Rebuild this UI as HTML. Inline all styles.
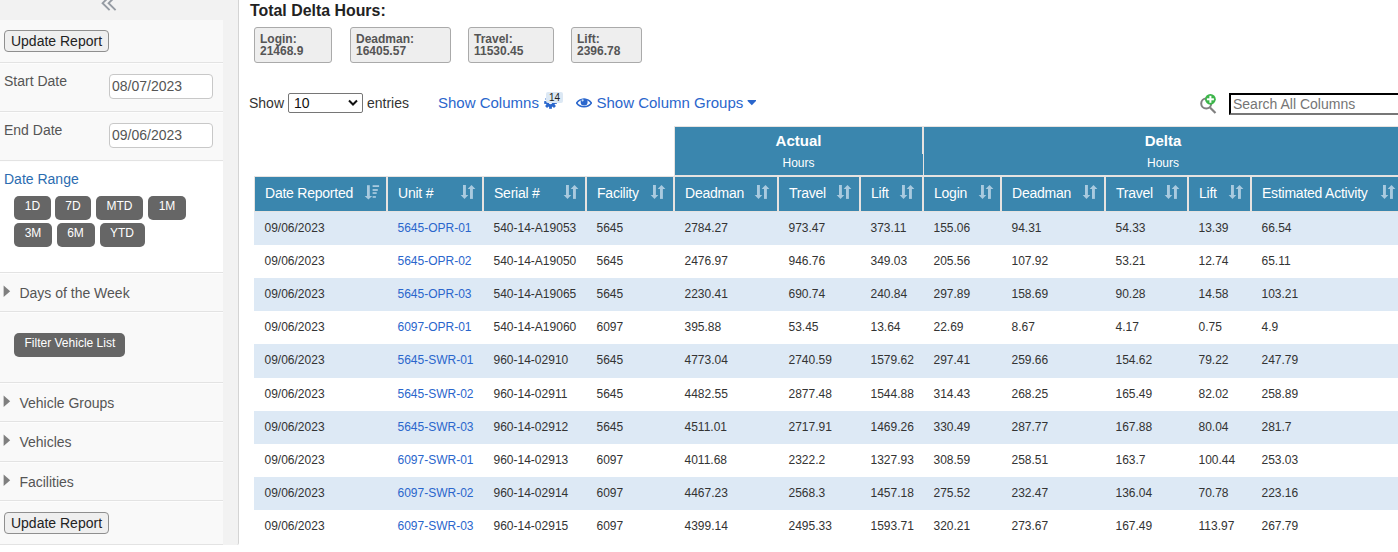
<!DOCTYPE html><html><head><meta charset="utf-8"><style>
*{box-sizing:border-box;margin:0;padding:0}
html,body{width:1398px;height:552px;overflow:hidden;background:#fff;font-family:"Liberation Sans",sans-serif;color:#333}
.a{position:absolute}
.sb{left:0;top:0;width:239px;height:545px;background:#f2f2f2;border-right:1px solid #d4d4d4;border-bottom-right-radius:2px}
.pn{left:0;width:223px;background:#f9f9f9}
.ln{left:0;width:223px;height:1px;background:#e3e3e3}
.lw{left:0;width:223px;height:1px;background:#fdfdfd}
.lbl{font-size:14px;color:#555;white-space:nowrap;line-height:16px}
.btn{font-size:14px;color:#222;background:#efefef;border:1px solid #8f8f8f;border-radius:4px;white-space:nowrap;text-align:center;line-height:21px}
.inp{background:#fff;border:1px solid #c8c8c8;border-radius:4px;font-size:14px;color:#555;line-height:22px;padding-left:2px}
.db{background:#666;color:#fff;font-size:12px;border-radius:5px;text-align:center;line-height:21px;height:23.5px}
.tri{width:0;height:0;border-top:5px solid transparent;border-bottom:5px solid transparent;border-left:6px solid #808080}
.box{top:27px;height:36px;background:#eee;border:1px solid #aaa;border-radius:3px;font-size:12px;font-weight:bold;color:#555;line-height:12px;padding:5px 0 0 5px;white-space:nowrap}
.th{background:#3a86ae;border:1px solid #e6e3e1;color:#fff;font-size:14px;letter-spacing:-0.23px;white-space:nowrap;line-height:16px}
.td{font-size:12px;white-space:nowrap;line-height:14px;color:#333}
.lk{color:#2a66cc}
</style></head><body>

<div class="a sb"></div>
<div class="a pn" style="top:20px;height:524px"></div>
<div class="a" style="left:0;top:161px;width:223px;height:111px;background:#fff"></div>
<svg class="a" style="left:0;top:0" width="239" height="20"><g fill="none" stroke="#959ba3" stroke-width="1.9"><polyline points="109.6,-3.8 102.6,3.2 109.6,10.2"/><polyline points="115.6,-3.8 108.6,3.2 115.6,10.2"/></g></svg>
<div class="a ln" style="top:62px"></div>
<div class="a lw" style="top:63px"></div>
<div class="a ln" style="top:111px"></div>
<div class="a lw" style="top:112px"></div>
<div class="a ln" style="top:160px"></div>
<div class="a lw" style="top:161px"></div>
<div class="a ln" style="top:272px"></div>
<div class="a lw" style="top:273px"></div>
<div class="a ln" style="top:311px"></div>
<div class="a lw" style="top:312px"></div>
<div class="a ln" style="top:382px"></div>
<div class="a lw" style="top:383px"></div>
<div class="a ln" style="top:421px"></div>
<div class="a lw" style="top:422px"></div>
<div class="a ln" style="top:461px"></div>
<div class="a lw" style="top:462px"></div>
<div class="a ln" style="top:500px"></div>
<div class="a lw" style="top:501px"></div>
<div class="a ln" style="top:544px"></div>
<div class="a btn" style="left:4px;top:30px;width:105px;height:22px">Update Report</div>
<div class="a lbl" style="left:4px;top:73px">Start Date</div>
<div class="a inp" style="left:109px;top:74px;width:104px;height:25px">08/07/2023</div>
<div class="a lbl" style="left:4px;top:122px">End Date</div>
<div class="a inp" style="left:109px;top:123px;width:104px;height:25px">09/06/2023</div>
<div class="a lbl" style="left:4px;top:171px;color:#2b6cb0">Date Range</div>
<div class="a db" style="left:14.0px;top:196.0px;width:37.0px">1D</div>
<div class="a db" style="left:55.0px;top:196.0px;width:36.0px">7D</div>
<div class="a db" style="left:96.0px;top:196.0px;width:47.0px">MTD</div>
<div class="a db" style="left:148.0px;top:196.0px;width:38.0px">1M</div>
<div class="a db" style="left:14.0px;top:223.0px;width:38.0px">3M</div>
<div class="a db" style="left:56.5px;top:223.0px;width:38.0px">6M</div>
<div class="a db" style="left:99.5px;top:223.0px;width:45.0px">YTD</div>
<svg class="a" style="left:0;top:284px" width="14" height="14"><polygon points="3.6,1.6 10.2,7.3 3.6,13" fill="#7f7f7f"/></svg>
<div class="a lbl" style="left:19.4px;top:285px">Days of the Week</div>
<svg class="a" style="left:0;top:394px" width="14" height="14"><polygon points="3.6,1.6 10.2,7.3 3.6,13" fill="#7f7f7f"/></svg>
<div class="a lbl" style="left:19.4px;top:395px">Vehicle Groups</div>
<svg class="a" style="left:0;top:433px" width="14" height="14"><polygon points="3.6,1.6 10.2,7.3 3.6,13" fill="#7f7f7f"/></svg>
<div class="a lbl" style="left:19.4px;top:434px">Vehicles</div>
<svg class="a" style="left:0;top:473px" width="14" height="14"><polygon points="3.6,1.6 10.2,7.3 3.6,13" fill="#7f7f7f"/></svg>
<div class="a lbl" style="left:19.4px;top:474px">Facilities</div>
<div class="a db" style="left:14.3px;top:333.2px;width:111.2px">Filter Vehicle List</div>
<div class="a btn" style="left:4px;top:512px;width:105px;height:22px">Update Report</div>
<div class="a" style="left:250px;top:2px;font-size:15.9px;font-weight:bold;color:#222;line-height:18px">Total Delta Hours:</div>
<div class="a box" style="left:254px;width:78px">Login:<br>21468.9</div>
<div class="a box" style="left:350px;width:101px">Deadman:<br>16405.57</div>
<div class="a box" style="left:468px;width:86px">Travel:<br>11530.45</div>
<div class="a box" style="left:571px;width:71px">Lift:<br>2396.78</div>
<div class="a lbl" style="left:249px;top:95px;color:#333">Show</div>
<div class="a" style="left:288px;top:93px;width:75px;height:20px;border:1px solid #767676;border-radius:2px;background:#fff;font-size:14px;line-height:18px;padding-left:5px;color:#111">10</div>
<svg class="a" style="left:348px;top:99px" width="10" height="8"><polyline points="1,1.5 5,5.5 9,1.5" fill="none" stroke="#111" stroke-width="2"/></svg>
<div class="a lbl" style="left:367px;top:95px;color:#333">entries</div>
<div class="a" style="left:438px;top:94px;font-size:15px;color:#2a66cc;line-height:17px;white-space:nowrap">Show Columns</div>
<svg class="a" style="left:543px;top:95px" width="15" height="15"><g fill="#2a66cc" transform="translate(7.5,7.5)"><circle r="4.6"/><rect x="-1.4" y="-6.3" width="2.8" height="12.6"/><rect x="-1.4" y="-6.3" width="2.8" height="12.6" transform="rotate(45)"/><rect x="-1.4" y="-6.3" width="2.8" height="12.6" transform="rotate(90)"/><rect x="-1.4" y="-6.3" width="2.8" height="12.6" transform="rotate(135)"/></g><circle cx="7.5" cy="7.5" r="1.8" fill="#fff"/></svg>
<div class="a" style="left:546px;top:92px;width:17px;height:11px;background:#dce8f4;border-radius:2px;font-size:10px;line-height:12px;text-align:center;color:#222">14</div>
<svg class="a" style="left:576px;top:97px" width="16" height="12"><path d="M0.6,6 C3.8,0.9 12.2,0.9 15.4,6 C12.2,11.1 3.8,11.1 0.6,6 Z" fill="none" stroke="#2a66cc" stroke-width="1.5"/><circle cx="8.1" cy="5" r="3.5" fill="#2a66cc"/><circle cx="6.6" cy="3.3" r="1.1" fill="#cfe0f5"/></svg>
<div class="a" style="left:596.5px;top:94px;font-size:15px;color:#2a66cc;line-height:17px;white-space:nowrap">Show Column Groups</div>
<svg class="a" style="left:747px;top:100px" width="10" height="6"><polygon points="0.6,0 9,0 9,0.9 4.8,5.2 0.6,0.9" fill="#2a66cc"/></svg>
<svg class="a" style="left:1196px;top:90px" width="26" height="26"><circle cx="10.2" cy="13.4" r="5" fill="none" stroke="#808080" stroke-width="2"/><line x1="14" y1="17.5" x2="19.5" y2="23" stroke="#808080" stroke-width="2.2"/><circle cx="14.4" cy="9.3" r="5.4" fill="#3cb54a"/><rect x="13.4" y="5.8" width="2" height="7" fill="#fff"/><rect x="10.9" y="8.3" width="7" height="2" fill="#fff"/></svg>
<div class="a" style="left:1229px;top:93px;width:200px;height:22px;border:2px inset #767676;border-top-color:#000;border-left-color:#000;border-bottom-color:#777;background:#fff;font-size:14px;line-height:18px;padding-left:2px;color:#757575;white-space:nowrap">Search All Columns</div>
<div class="a th" style="left:674px;top:126px;width:249px;height:50px"></div>
<div class="a th" style="left:923px;top:126px;width:480px;height:50px"></div>
<div class="a" style="left:922px;top:154px;width:1px;height:21px;background:#3a86ae"></div>
<div class="a" style="left:674px;top:132px;width:249px;text-align:center;color:#fff;font-weight:bold;font-size:15px;line-height:17px">Actual</div>
<div class="a" style="left:674px;top:156px;width:249px;text-align:center;color:#fff;font-size:12px;line-height:14px">Hours</div>
<div class="a" style="left:923px;top:132px;width:480px;text-align:center;color:#fff;font-weight:bold;font-size:15px;line-height:17px">Delta</div>
<div class="a" style="left:923px;top:156px;width:480px;text-align:center;color:#fff;font-size:12px;line-height:14px">Hours</div>
<div class="a th" style="left:254px;top:176px;width:133px;height:36px;padding:8px 0 0 10px">Date Reported</div>
<svg class="a" style="left:364.0px;top:185px" width="17" height="16"><g fill="#a9cadf"><rect x="3" y="0.2" width="2.8" height="11.2"/><polygon points="0.6,11.1 8.2,11.1 4.4,14.6"/><rect x="8.6" y="0.2" width="6.5" height="1.8"/><rect x="8.6" y="4.1" width="5.2" height="1.8"/><rect x="8.6" y="7.2" width="4.1" height="1.7"/><rect x="8.6" y="11.1" width="3.3" height="1.7"/></g></svg>
<div class="a th" style="left:387px;top:176px;width:96px;height:36px;padding:8px 0 0 10px">Unit #</div>
<svg class="a" style="left:460.0px;top:185px" width="17" height="16"><g fill="#a9cadf"><rect x="3" y="0" width="2.9" height="10.4"/><polygon points="0.65,10 8.3,10 4.5,14.1"/><polygon points="7.6,3.9 15.4,3.9 11.5,0"/><rect x="10" y="3.8" width="2.9" height="10.1"/></g></svg>
<div class="a th" style="left:483px;top:176px;width:103px;height:36px;padding:8px 0 0 10px">Serial #</div>
<svg class="a" style="left:563.0px;top:185px" width="17" height="16"><g fill="#a9cadf"><rect x="3" y="0" width="2.9" height="10.4"/><polygon points="0.65,10 8.3,10 4.5,14.1"/><polygon points="7.6,3.9 15.4,3.9 11.5,0"/><rect x="10" y="3.8" width="2.9" height="10.1"/></g></svg>
<div class="a th" style="left:586px;top:176px;width:88px;height:36px;padding:8px 0 0 10px">Facility</div>
<svg class="a" style="left:650.0px;top:185px" width="17" height="16"><g fill="#a9cadf"><rect x="3" y="0" width="2.9" height="10.4"/><polygon points="0.65,10 8.3,10 4.5,14.1"/><polygon points="7.6,3.9 15.4,3.9 11.5,0"/><rect x="10" y="3.8" width="2.9" height="10.1"/></g></svg>
<div class="a th" style="left:674px;top:176px;width:104px;height:36px;padding:8px 0 0 10px">Deadman</div>
<svg class="a" style="left:754.0px;top:185px" width="17" height="16"><g fill="#a9cadf"><rect x="3" y="0" width="2.9" height="10.4"/><polygon points="0.65,10 8.3,10 4.5,14.1"/><polygon points="7.6,3.9 15.4,3.9 11.5,0"/><rect x="10" y="3.8" width="2.9" height="10.1"/></g></svg>
<div class="a th" style="left:778px;top:176px;width:82px;height:36px;padding:8px 0 0 10px">Travel</div>
<svg class="a" style="left:836.0px;top:185px" width="17" height="16"><g fill="#a9cadf"><rect x="3" y="0" width="2.9" height="10.4"/><polygon points="0.65,10 8.3,10 4.5,14.1"/><polygon points="7.6,3.9 15.4,3.9 11.5,0"/><rect x="10" y="3.8" width="2.9" height="10.1"/></g></svg>
<div class="a th" style="left:860px;top:176px;width:63px;height:36px;padding:8px 0 0 10px">Lift</div>
<svg class="a" style="left:899.0px;top:185px" width="17" height="16"><g fill="#a9cadf"><rect x="3" y="0" width="2.9" height="10.4"/><polygon points="0.65,10 8.3,10 4.5,14.1"/><polygon points="7.6,3.9 15.4,3.9 11.5,0"/><rect x="10" y="3.8" width="2.9" height="10.1"/></g></svg>
<div class="a th" style="left:923px;top:176px;width:78px;height:36px;padding:8px 0 0 10px">Login</div>
<svg class="a" style="left:978.0px;top:185px" width="17" height="16"><g fill="#a9cadf"><rect x="3" y="0" width="2.9" height="10.4"/><polygon points="0.65,10 8.3,10 4.5,14.1"/><polygon points="7.6,3.9 15.4,3.9 11.5,0"/><rect x="10" y="3.8" width="2.9" height="10.1"/></g></svg>
<div class="a th" style="left:1001px;top:176px;width:104px;height:36px;padding:8px 0 0 10px">Deadman</div>
<svg class="a" style="left:1082.0px;top:185px" width="17" height="16"><g fill="#a9cadf"><rect x="3" y="0" width="2.9" height="10.4"/><polygon points="0.65,10 8.3,10 4.5,14.1"/><polygon points="7.6,3.9 15.4,3.9 11.5,0"/><rect x="10" y="3.8" width="2.9" height="10.1"/></g></svg>
<div class="a th" style="left:1105px;top:176px;width:83px;height:36px;padding:8px 0 0 10px">Travel</div>
<svg class="a" style="left:1164.0px;top:185px" width="17" height="16"><g fill="#a9cadf"><rect x="3" y="0" width="2.9" height="10.4"/><polygon points="0.65,10 8.3,10 4.5,14.1"/><polygon points="7.6,3.9 15.4,3.9 11.5,0"/><rect x="10" y="3.8" width="2.9" height="10.1"/></g></svg>
<div class="a th" style="left:1188px;top:176px;width:63px;height:36px;padding:8px 0 0 10px">Lift</div>
<svg class="a" style="left:1228.0px;top:185px" width="17" height="16"><g fill="#a9cadf"><rect x="3" y="0" width="2.9" height="10.4"/><polygon points="0.65,10 8.3,10 4.5,14.1"/><polygon points="7.6,3.9 15.4,3.9 11.5,0"/><rect x="10" y="3.8" width="2.9" height="10.1"/></g></svg>
<div class="a th" style="left:1251px;top:176px;width:152px;height:36px;padding:8px 0 0 10px">Estimated Activity</div>
<svg class="a" style="left:1380.0px;top:185px" width="17" height="16"><g fill="#a9cadf"><rect x="3" y="0" width="2.9" height="10.4"/><polygon points="0.65,10 8.3,10 4.5,14.1"/><polygon points="7.6,3.9 15.4,3.9 11.5,0"/><rect x="10" y="3.8" width="2.9" height="10.1"/></g></svg>
<div class="a" style="left:254px;top:212px;width:1150px;height:33px;background:#dde9f5"></div>
<div class="a td" style="left:264.5px;top:221px">09/06/2023</div>
<div class="a td lk" style="left:397.5px;top:221px">5645-OPR-01</div>
<div class="a td" style="left:493.5px;top:221px">540-14-A19053</div>
<div class="a td" style="left:596.5px;top:221px">5645</div>
<div class="a td" style="left:684.5px;top:221px">2784.27</div>
<div class="a td" style="left:788.5px;top:221px">973.47</div>
<div class="a td" style="left:870.5px;top:221px">373.11</div>
<div class="a td" style="left:933.5px;top:221px">155.06</div>
<div class="a td" style="left:1011.5px;top:221px">94.31</div>
<div class="a td" style="left:1115.5px;top:221px">54.33</div>
<div class="a td" style="left:1198.5px;top:221px">13.39</div>
<div class="a td" style="left:1261.5px;top:221px">66.54</div>
<div class="a td" style="left:264.5px;top:254px">09/06/2023</div>
<div class="a td lk" style="left:397.5px;top:254px">5645-OPR-02</div>
<div class="a td" style="left:493.5px;top:254px">540-14-A19050</div>
<div class="a td" style="left:596.5px;top:254px">5645</div>
<div class="a td" style="left:684.5px;top:254px">2476.97</div>
<div class="a td" style="left:788.5px;top:254px">946.76</div>
<div class="a td" style="left:870.5px;top:254px">349.03</div>
<div class="a td" style="left:933.5px;top:254px">205.56</div>
<div class="a td" style="left:1011.5px;top:254px">107.92</div>
<div class="a td" style="left:1115.5px;top:254px">53.21</div>
<div class="a td" style="left:1198.5px;top:254px">12.74</div>
<div class="a td" style="left:1261.5px;top:254px">65.11</div>
<div class="a" style="left:254px;top:278px;width:1150px;height:33px;background:#dde9f5"></div>
<div class="a td" style="left:264.5px;top:287px">09/06/2023</div>
<div class="a td lk" style="left:397.5px;top:287px">5645-OPR-03</div>
<div class="a td" style="left:493.5px;top:287px">540-14-A19065</div>
<div class="a td" style="left:596.5px;top:287px">5645</div>
<div class="a td" style="left:684.5px;top:287px">2230.41</div>
<div class="a td" style="left:788.5px;top:287px">690.74</div>
<div class="a td" style="left:870.5px;top:287px">240.84</div>
<div class="a td" style="left:933.5px;top:287px">297.89</div>
<div class="a td" style="left:1011.5px;top:287px">158.69</div>
<div class="a td" style="left:1115.5px;top:287px">90.28</div>
<div class="a td" style="left:1198.5px;top:287px">14.58</div>
<div class="a td" style="left:1261.5px;top:287px">103.21</div>
<div class="a td" style="left:264.5px;top:320px">09/06/2023</div>
<div class="a td lk" style="left:397.5px;top:320px">6097-OPR-01</div>
<div class="a td" style="left:493.5px;top:320px">540-14-A19060</div>
<div class="a td" style="left:596.5px;top:320px">6097</div>
<div class="a td" style="left:684.5px;top:320px">395.88</div>
<div class="a td" style="left:788.5px;top:320px">53.45</div>
<div class="a td" style="left:870.5px;top:320px">13.64</div>
<div class="a td" style="left:933.5px;top:320px">22.69</div>
<div class="a td" style="left:1011.5px;top:320px">8.67</div>
<div class="a td" style="left:1115.5px;top:320px">4.17</div>
<div class="a td" style="left:1198.5px;top:320px">0.75</div>
<div class="a td" style="left:1261.5px;top:320px">4.9</div>
<div class="a" style="left:254px;top:344px;width:1150px;height:34px;background:#dde9f5"></div>
<div class="a td" style="left:264.5px;top:353px">09/06/2023</div>
<div class="a td lk" style="left:397.5px;top:353px">5645-SWR-01</div>
<div class="a td" style="left:493.5px;top:353px">960-14-02910</div>
<div class="a td" style="left:596.5px;top:353px">5645</div>
<div class="a td" style="left:684.5px;top:353px">4773.04</div>
<div class="a td" style="left:788.5px;top:353px">2740.59</div>
<div class="a td" style="left:870.5px;top:353px">1579.62</div>
<div class="a td" style="left:933.5px;top:353px">297.41</div>
<div class="a td" style="left:1011.5px;top:353px">259.66</div>
<div class="a td" style="left:1115.5px;top:353px">154.62</div>
<div class="a td" style="left:1198.5px;top:353px">79.22</div>
<div class="a td" style="left:1261.5px;top:353px">247.79</div>
<div class="a td" style="left:264.5px;top:387px">09/06/2023</div>
<div class="a td lk" style="left:397.5px;top:387px">5645-SWR-02</div>
<div class="a td" style="left:493.5px;top:387px">960-14-02911</div>
<div class="a td" style="left:596.5px;top:387px">5645</div>
<div class="a td" style="left:684.5px;top:387px">4482.55</div>
<div class="a td" style="left:788.5px;top:387px">2877.48</div>
<div class="a td" style="left:870.5px;top:387px">1544.88</div>
<div class="a td" style="left:933.5px;top:387px">314.43</div>
<div class="a td" style="left:1011.5px;top:387px">268.25</div>
<div class="a td" style="left:1115.5px;top:387px">165.49</div>
<div class="a td" style="left:1198.5px;top:387px">82.02</div>
<div class="a td" style="left:1261.5px;top:387px">258.89</div>
<div class="a" style="left:254px;top:411px;width:1150px;height:33px;background:#dde9f5"></div>
<div class="a td" style="left:264.5px;top:420px">09/06/2023</div>
<div class="a td lk" style="left:397.5px;top:420px">5645-SWR-03</div>
<div class="a td" style="left:493.5px;top:420px">960-14-02912</div>
<div class="a td" style="left:596.5px;top:420px">5645</div>
<div class="a td" style="left:684.5px;top:420px">4511.01</div>
<div class="a td" style="left:788.5px;top:420px">2717.91</div>
<div class="a td" style="left:870.5px;top:420px">1469.26</div>
<div class="a td" style="left:933.5px;top:420px">330.49</div>
<div class="a td" style="left:1011.5px;top:420px">287.77</div>
<div class="a td" style="left:1115.5px;top:420px">167.88</div>
<div class="a td" style="left:1198.5px;top:420px">80.04</div>
<div class="a td" style="left:1261.5px;top:420px">281.7</div>
<div class="a td" style="left:264.5px;top:453px">09/06/2023</div>
<div class="a td lk" style="left:397.5px;top:453px">6097-SWR-01</div>
<div class="a td" style="left:493.5px;top:453px">960-14-02913</div>
<div class="a td" style="left:596.5px;top:453px">6097</div>
<div class="a td" style="left:684.5px;top:453px">4011.68</div>
<div class="a td" style="left:788.5px;top:453px">2322.2</div>
<div class="a td" style="left:870.5px;top:453px">1327.93</div>
<div class="a td" style="left:933.5px;top:453px">308.59</div>
<div class="a td" style="left:1011.5px;top:453px">258.51</div>
<div class="a td" style="left:1115.5px;top:453px">163.7</div>
<div class="a td" style="left:1198.5px;top:453px">100.44</div>
<div class="a td" style="left:1261.5px;top:453px">253.03</div>
<div class="a" style="left:254px;top:477px;width:1150px;height:33px;background:#dde9f5"></div>
<div class="a td" style="left:264.5px;top:486px">09/06/2023</div>
<div class="a td lk" style="left:397.5px;top:486px">6097-SWR-02</div>
<div class="a td" style="left:493.5px;top:486px">960-14-02914</div>
<div class="a td" style="left:596.5px;top:486px">6097</div>
<div class="a td" style="left:684.5px;top:486px">4467.23</div>
<div class="a td" style="left:788.5px;top:486px">2568.3</div>
<div class="a td" style="left:870.5px;top:486px">1457.18</div>
<div class="a td" style="left:933.5px;top:486px">275.52</div>
<div class="a td" style="left:1011.5px;top:486px">232.47</div>
<div class="a td" style="left:1115.5px;top:486px">136.04</div>
<div class="a td" style="left:1198.5px;top:486px">70.78</div>
<div class="a td" style="left:1261.5px;top:486px">223.16</div>
<div class="a td" style="left:264.5px;top:519px">09/06/2023</div>
<div class="a td lk" style="left:397.5px;top:519px">6097-SWR-03</div>
<div class="a td" style="left:493.5px;top:519px">960-14-02915</div>
<div class="a td" style="left:596.5px;top:519px">6097</div>
<div class="a td" style="left:684.5px;top:519px">4399.14</div>
<div class="a td" style="left:788.5px;top:519px">2495.33</div>
<div class="a td" style="left:870.5px;top:519px">1593.71</div>
<div class="a td" style="left:933.5px;top:519px">320.21</div>
<div class="a td" style="left:1011.5px;top:519px">273.67</div>
<div class="a td" style="left:1115.5px;top:519px">167.49</div>
<div class="a td" style="left:1198.5px;top:519px">113.97</div>
<div class="a td" style="left:1261.5px;top:519px">267.79</div>
</body></html>
